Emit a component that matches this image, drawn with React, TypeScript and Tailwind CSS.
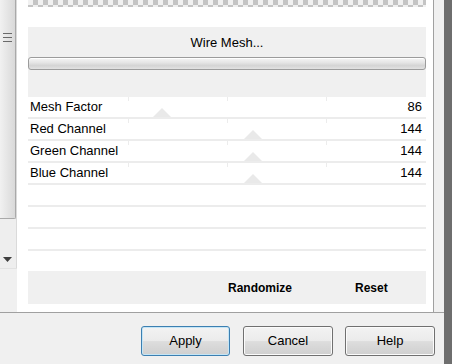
import React from "react";

type Row = { label: string; value: number } | null;

const rows: Row[] = [
  { label: "Mesh Factor", value: 86 },
  { label: "Red Channel", value: 144 },
  { label: "Green Channel", value: 144 },
  { label: "Blue Channel", value: 144 },
  null,
  null,
  null,
];

function SliderRow({ row }: { row: Row }) {
  // slider track runs under the whole row width (398px), value 0..255
  const pos = row ? Math.round((row.value / 255) * 398) : 0;
  return (
    <div className="relative h-[22px] border-b-2 border-[#ececec] bg-white flex items-center justify-between pl-[2px] pr-[4px]">
      {row && (
        <>
          {[100, 199, 298].map((x) => (
            <div key={x} className="absolute top-0 w-px h-[4px] bg-[#ececec]" style={{ left: x }} />
          ))}
          <svg
            className="absolute bottom-0"
            style={{ left: pos - 9 }}
            width="18"
            height="9"
            viewBox="0 0 18 9"
          >
            <polygon points="0,9 9,0 18,9" fill="#e9e9e9" />
          </svg>
          <span className="relative">{row.label}</span>
          <span className="relative">{row.value}</span>
        </>
      )}
    </div>
  );
}

function Button({ label, focused }: { label: string; focused?: boolean }) {
  return (
    <button
      className={
        "h-[30px] rounded-[3px] border text-[13px] text-black bg-[linear-gradient(#f3f3f3,#ebebeb_48%,#dddddd_52%,#cfcfcf)] " +
        (focused
          ? "w-[89px] border-[#3c7fb1] shadow-[inset_0_0_0_1px_#c4e5f6]"
          : "w-[90px] border-[#707070] shadow-[inset_0_0_0_1px_#fbfbfb]")
      }
    >
      {label}
    </button>
  );
}

export default function App() {
  return (
    <div
      className="w-[452px] h-[364px] flex overflow-hidden bg-[#f0f0f0] text-[13px] text-black"
      style={{ fontFamily: '"Liberation Sans", Arial, sans-serif' }}
    >
      <div className="w-[444px] flex flex-col">
        {/* upper bordered panel */}
        <div className="h-[313px] flex border-b border-[#a0a0a0]">
          {/* scrollbar column */}
          <div className="w-[17px] flex flex-col">
            <div className="h-[268px] flex flex-col bg-[#eeeeee] border-r border-[#dadada]">
              <div className="h-[219px] flex flex-col items-center pt-[33px] gap-[3px] bg-gradient-to-r from-[#f1f1f1] to-[#d9d9d9] border-r border-b border-[#a9a9a9] rounded-br-[2px]">
                <div className="w-[9px] h-px bg-[#6a6a6a]" />
                <div className="w-[9px] h-px bg-[#6a6a6a]" />
                <div className="w-[9px] h-px bg-[#6a6a6a]" />
              </div>
              <div className="flex-1" />
              <div className="h-[18px] flex items-center justify-center pr-[1px]">
                <svg width="9" height="5" viewBox="0 0 9 5">
                  <polygon points="0,0 9,0 4.5,5" fill="#3e3e3e" />
                </svg>
              </div>
            </div>
            <div className="flex-1 border-t border-[#e2e2e2] bg-[#f0f0f0]" />
          </div>

          {/* white content panel */}
          <div className="w-[417px] bg-white border-r border-[#a0a0a0] pl-[11px] pr-[7px] flex flex-col">
            <div className="h-[7px] bg-[conic-gradient(#c4c4c4_25%,#f1f1f1_0_50%,#c4c4c4_0_75%,#f1f1f1_0)] bg-[length:10px_10px]" />
            <div className="mt-[20px] h-[70px] bg-[#f0f0f0] flex flex-col">
              <div className="h-[30px] flex items-center justify-center pt-[1px]">Wire Mesh...</div>
              <div className="h-[13px] rounded-[3px] border border-[#9c9c9c] bg-[linear-gradient(#f6f6f6,#e6e6e6_40%,#d4d4d4_70%,#e2e2e2)] shadow-[inset_0_1px_0_#ffffff]" />
            </div>
            {rows.map((r, i) => (
              <SliderRow key={i} row={r} />
            ))}
            <div className="h-[20px]" />
            <div className="h-[33px] bg-[#f0f0f0] flex items-center text-[12px] font-bold">
              <span className="ml-[200px]">Randomize</span>
              <span className="ml-[63px]">Reset</span>
            </div>
          </div>
          <div className="flex-1 bg-[#f0f0f0]" />
        </div>

        {/* dialog buttons */}
        <div className="flex-1 flex pt-[13px] pl-[141px] gap-[12px]">
          <div className="mr-[1px]">
            <Button label="Apply" focused />
          </div>
          <Button label="Cancel" />
          <Button label="Help" />
        </div>
      </div>
      <div className="flex-1 bg-[#6e6e6e]" />
    </div>
  );
}
